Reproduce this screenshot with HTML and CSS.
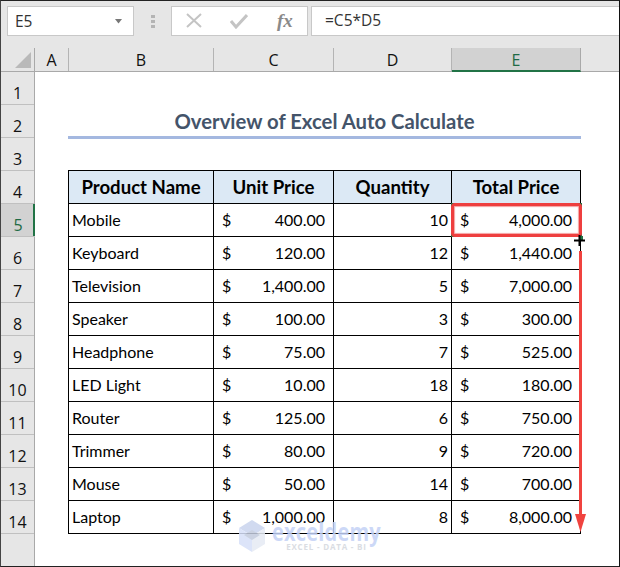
FILE: index.html
```html
<!DOCTYPE html>
<html lang="en">
<head>
<meta charset="utf-8">
<title>Overview of Excel Auto Calculate</title>
<link rel="stylesheet" href="styles.css">
</head>
<body>
<div class="app">
  <div class="formula-bar">
    <div class="name-box"><span>E5</span><svg class="caret" width="9" height="5" viewBox="0 0 9 5"><path d="M1 0h7L4.500 4.500z" fill="#777"/></svg></div>
    <div class="grip"><i></i><i></i><i></i></div>
    <div class="fx-box">
      <svg width="18" height="16" viewBox="0 0 18 16"><path d="M2 1l14 13M16 1L2 14" stroke="#c4c4c4" stroke-width="2" fill="none"/></svg>
      <svg width="18" height="16" viewBox="0 0 18 16"><path d="M1 8l5 6L17 2" stroke="#c4c4c4" stroke-width="3" fill="none"/></svg>
      <span class="fx">fx</span>
    </div>
    <div class="formula-input">=C5*D5</div>
  </div>
  <div class="col-headers">
    <div class="corner"><svg width="16" height="16" viewBox="0 0 16 16"><path d="M16 0v16H0z" fill="#b9b9b9"/></svg></div>
    <div class="ch ch-a">A</div>
    <div class="ch ch-b">B</div>
    <div class="ch ch-c">C</div>
    <div class="ch ch-d">D</div>
    <div class="ch ch-e">E</div>
  </div>
  <div class="sheet">
    <div class="row-headers">
      <div class="rh">1</div><div class="rh">2</div><div class="rh">3</div><div class="rh">4</div>
      <div class="rh rh-active">5</div><div class="rh">6</div><div class="rh">7</div><div class="rh">8</div>
      <div class="rh">9</div><div class="rh">10</div><div class="rh">11</div><div class="rh">12</div>
      <div class="rh">13</div><div class="rh">14</div>
    </div>
    <div class="canvas">
      <div class="title-row"><h1 class="title">Overview of Excel Auto Calculate</h1></div>
      <table class="data">
        <thead>
          <tr><th class="c-b">Product Name</th><th class="c-c">Unit Price</th><th class="c-d">Quantity</th><th class="c-e">Total Price</th></tr>
        </thead>
        <tbody>
          <tr><td class="name">Mobile</td><td><div class="money"><span>$</span><span>400.00</span></div></td><td class="qty">10</td><td><div class="money"><span>$</span><span>4,000.00</span></div></td></tr>
          <tr><td class="name">Keyboard</td><td><div class="money"><span>$</span><span>120.00</span></div></td><td class="qty">12</td><td><div class="money"><span>$</span><span>1,440.00</span></div></td></tr>
          <tr><td class="name">Television</td><td><div class="money"><span>$</span><span>1,400.00</span></div></td><td class="qty">5</td><td><div class="money"><span>$</span><span>7,000.00</span></div></td></tr>
          <tr><td class="name">Speaker</td><td><div class="money"><span>$</span><span>100.00</span></div></td><td class="qty">3</td><td><div class="money"><span>$</span><span>300.00</span></div></td></tr>
          <tr><td class="name">Headphone</td><td><div class="money"><span>$</span><span>75.00</span></div></td><td class="qty">7</td><td><div class="money"><span>$</span><span>525.00</span></div></td></tr>
          <tr><td class="name">LED Light</td><td><div class="money"><span>$</span><span>10.00</span></div></td><td class="qty">18</td><td><div class="money"><span>$</span><span>180.00</span></div></td></tr>
          <tr><td class="name">Router</td><td><div class="money"><span>$</span><span>125.00</span></div></td><td class="qty">6</td><td><div class="money"><span>$</span><span>750.00</span></div></td></tr>
          <tr><td class="name">Trimmer</td><td><div class="money"><span>$</span><span>80.00</span></div></td><td class="qty">9</td><td><div class="money"><span>$</span><span>720.00</span></div></td></tr>
          <tr><td class="name">Mouse</td><td><div class="money"><span>$</span><span>50.00</span></div></td><td class="qty">14</td><td><div class="money"><span>$</span><span>700.00</span></div></td></tr>
          <tr><td class="name">Laptop</td><td><div class="money"><span>$</span><span>1,000.00</span></div></td><td class="qty">8</td><td><div class="money"><span>$</span><span>8,000.00</span></div></td></tr>
        </tbody>
      </table>
      <div class="active-cell"></div>
      <div class="selection"></div>
      <div class="handle"></div>
      <svg class="arrow" width="14" height="294" viewBox="0 0 14 294"><rect x="5" y="12" width="3" height="270" fill="#f0433f"/><path d="M1 275h11l-5.500 18z" fill="#f0433f"/></svg>
      <svg class="cross" width="13" height="13" viewBox="0 0 13 13"><path d="M6.500 1v11M1 6.500h11" stroke="#000" stroke-width="2"/></svg>
      <div class="watermark">
        <svg width="28" height="32" viewBox="0 0 28 32"><path d="M14 0l13 8-13 8L1 8z" fill="#c9d4ee"/><path d="M1 8l13 8v16L1 24z" fill="#d6e0f8"/><path d="M27 8L14 16v16l13-8z" fill="#e6ebf4"/><path d="M14 10l8 5-8 5-8-5z" fill="#c2cbdd"/></svg>
        <div class="wm-text"><div class="wm-name">exceldemy</div><div class="wm-sub">EXCEL - DATA - BI</div></div>
      </div>
    </div>
  </div>
</div>
</body>
</html>
```
FILE: styles.css
```css
* { box-sizing: border-box; }
html, body { margin: 0; padding: 0; }
body { width: 620px; height: 567px; overflow: hidden; background: #fff; }

.app {
  width: 620px;
  height: 567px;
  display: flex;
  flex-direction: column;
  border-top: 1px solid #222;
  border-bottom: 1px solid #222;
  border-left: 1px solid #444;
  border-right: 1px solid #111;
  background: #e6e6e6;
  overflow: hidden;
  font-family: "Open Sans", "Noto Sans", sans-serif;
}

.formula-bar {
  height: 47px;
  flex: none;
  display: flex;
  align-items: flex-start;
  padding: 5px 0 0 6px;
}
.name-box {
  width: 127px;
  height: 30px;
  background: #fff;
  border: 1px solid #c8c8c8;
  display: flex;
  align-items: center;
  justify-content: space-between;
  padding: 0 10px 0 7px;
  font-size: 15.500px;
  color: #333;
}
.grip {
  width: 37px;
  height: 30px;
  display: flex;
  flex-direction: column;
  align-items: center;
  justify-content: center;
  gap: 2px;
}
.grip i { display: block; width: 4px; height: 3px; background: #b4b4b4; }
.fx-box {
  width: 137px;
  height: 30px;
  background: #fff;
  border: 1px solid #c8c8c8;
  display: flex;
  align-items: center;
  gap: 27px;
  padding: 0 0 0 13px;
}
.fx {
  font-family: "Liberation Serif", serif;
  font-style: italic;
  font-weight: 700;
  font-size: 19px;
  color: #8a8a8a;
  margin-left: 2px;
}
.formula-input {
  flex: 1;
  height: 30px;
  margin-left: 3px;
  background: #fff;
  border: 1px solid #c8c8c8;
  border-right: 0;
  padding-left: 13px;
  line-height: 27px;
  font-size: 15.500px;
  color: #333;
}

.col-headers {
  height: 24px;
  flex: none;
  display: flex;
  border-bottom: 1px solid #a9a9a9;
  font-size: 16px;
  color: #111;
}
.corner {
  width: 34px;
  border-right: 1px solid #a9a9a9;
  display: flex;
  align-items: flex-end;
  justify-content: flex-end;
  padding: 0 3px 3px 0;
}
.ch {
  text-align: center;
  line-height: 25px;
  border-right: 1px solid #b4b4b4;
}
.ch-a { width: 34px; }
.ch-b { width: 145px; }
.ch-c { width: 120px; }
.ch-d { width: 118px; }
.ch-e {
  width: 129px;
  margin-bottom: -1px;
  background: #d2d2d2;
  color: #1f6b45;
  border-bottom: 2px solid #217346;
  border-right: 1px solid #a9a9a9;
}

.sheet { flex: 1; display: flex; min-height: 0; }
.row-headers {
  width: 34px;
  flex: none;
  border-right: 1px solid #a9a9a9;
}
.rh {
  height: 33px;
  border-bottom: 1px solid #c0c0c0;
  text-align: center;
  font-size: 16px;
  line-height: 34px;
  padding-top: 4px;
  color: #111;
}
.rh-active {
  background: #d2d2d2;
  color: #1f6b45;
  box-shadow: inset -2px 0 0 #217346;
  margin-right: -1px;
}

.canvas {
  flex: 1;
  position: relative;
  background: #fff;
  padding-left: 33px;
}
.title-row {
  position: relative;
  height: 66px;
  width: 513px;
  display: flex;
  align-items: flex-end;
  justify-content: center;
  padding-bottom: 2px;
}
.title-row::after {
  content: "";
  position: absolute;
  left: 0;
  right: 0;
  bottom: -1px;
  height: 3px;
  background: #a4b8e0;
}
.title {
  margin: 0;
  font-family: Lato, "Open Sans", sans-serif;
  font-weight: 700;
  font-size: 20.300px;
  line-height: 30px;
  color: #44546a;
}
.data {
  margin-top: 32px;
  border-collapse: collapse;
  table-layout: fixed;
  width: 513px;
  font-family: Lato, "Open Sans", sans-serif;
  font-size: 16px;
  color: #000;
}
.data th, .data td { border: 1px solid #000; height: 33px; padding: 0 0 2px; }
.data th {
  background: #dce9f5;
  font-weight: 700;
  font-size: 18.600px;
  text-align: center;
  padding: 0;
}
.c-b { width: 145px; }
.c-c { width: 120px; }
.c-d { width: 118px; }
.c-e { width: 129px; }
.data .name { padding-left: 3px; }
.data .qty { text-align: right; padding-right: 3px; }
.money { display: flex; justify-content: space-between; padding: 0 8px 0 8px; }

.active-cell {
  position: absolute;
  left: 416px;
  top: 131px;
  width: 131px;
  height: 34px;
  border: 2px solid #217346;
}
.selection {
  position: absolute;
  left: 416px;
  top: 131px;
  width: 131px;
  height: 34px;
  border: 3px solid #ee3f3f;
  border-radius: 4px;
  box-shadow: inset 0 0 1px 1px #f4a0a0;
}
.handle {
  position: absolute;
  left: 544px;
  top: 164px;
  width: 4px;
  height: 4px;
  background: #217346;
}
.cross { position: absolute; left: 538px; top: 162px; }
.arrow { position: absolute; left: 539px; top: 167px; }

.watermark {
  position: absolute;
  left: 203px;
  top: 448px;
  display: flex;
  align-items: flex-start;
  gap: 6px;
  opacity: .85;
}
.wm-name {
  font-family: "Open Sans", sans-serif;
  font-weight: 700;
  font-size: 20px;
  line-height: 20px;
  letter-spacing: .2px;
  color: #c4d2f6;
  transform: scaleY(1.25);
  transform-origin: top;
}
.wm-sub {
  font-family: "Open Sans", sans-serif;
  font-weight: 700;
  font-size: 8px;
  line-height: 9px;
  margin-top: 2px;
  letter-spacing: .8px;
  text-align: center;
  color: #d4d8de;
}
```
